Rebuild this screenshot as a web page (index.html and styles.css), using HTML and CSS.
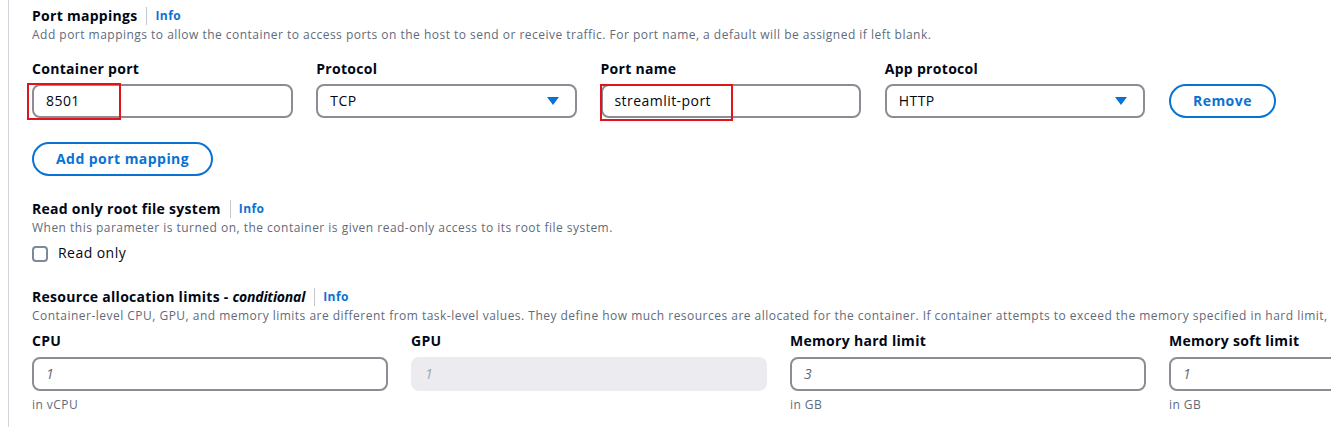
FILE: index.html
```html
<!DOCTYPE html>
<html lang="en">
<head>
<meta charset="utf-8">
<title>Port mappings</title>
<link rel="stylesheet" href="styles.css">
</head>
<body>
<div class="panel">
  <section class="sec sec-ports">
    <div class="head"><h3>Port mappings</h3><span class="sep"></span><a class="info">Info</a></div>
    <p class="desc">Add port mappings to allow the container to access ports on the host to send or receive traffic. For port name, a default will be assigned if left blank.</p>
    <div class="row-ports">
      <div class="field">
        <label class="label">Container port</label>
        <div class="input">8501</div>
        <span class="mark mark-port"></span>
      </div>
      <div class="field">
        <label class="label">Protocol</label>
        <div class="input select">TCP<span class="caret"></span></div>
      </div>
      <div class="field">
        <label class="label">Port name</label>
        <div class="input">streamlit-port</div>
        <span class="mark mark-name"></span>
      </div>
      <div class="field">
        <label class="label">App protocol</label>
        <div class="input select">HTTP<span class="caret"></span></div>
      </div>
      <div class="field field-btn">
        <button class="btn">Remove</button>
      </div>
    </div>
    <button class="btn btn-add">Add port mapping</button>
  </section>

  <section class="sec sec-ro">
    <div class="head"><h3>Read only root file system</h3><span class="sep"></span><a class="info">Info</a></div>
    <p class="desc">When this parameter is turned on, the container is given read-only access to its root file system.</p>
    <div class="check"><span class="box"></span><span>Read only</span></div>
  </section>

  <section class="sec sec-res">
    <div class="head"><h3>Resource allocation limits - <em>conditional</em></h3><span class="sep"></span><a class="info">Info</a></div>
    <p class="desc nowrap">Container-level CPU, GPU, and memory limits are different from task-level values. They define how much resources are allocated for the container. If container attempts to exceed the memory specified in hard limit, the container is terminated.</p>
    <div class="row-res">
      <div class="field">
        <label class="label">CPU</label>
        <div class="input ph">1</div>
        <p class="hint">in vCPU</p>
      </div>
      <div class="field">
        <label class="label">GPU</label>
        <div class="input ph disabled">1</div>
      </div>
      <div class="field">
        <label class="label">Memory hard limit</label>
        <div class="input ph">3</div>
        <p class="hint">in GB</p>
      </div>
      <div class="field">
        <label class="label">Memory soft limit</label>
        <div class="input ph">1</div>
        <p class="hint">in GB</p>
      </div>
    </div>
  </section>
</div>
</body>
</html>
```

FILE: styles.css
```css
html, body {
  margin: 0;
  padding: 0;
  overflow: hidden;
  background: #ffffff;
}
body {
  font-family: "Open Sans", "Noto Sans", Arial, sans-serif;
  color: #000716;
  font-size: 14px;
  line-height: 22px;
  letter-spacing: 0.45px;
}
.panel {
  margin-left: 8px;
  border-left: 1px solid #d1d5db;
  padding: 5px 0 20px 23px;
  width: 1500px;
  min-height: 420px;
}
.head {
  display: flex;
  align-items: center;
  height: 22px;
}
.head h3 {
  margin: 0;
  font-size: 14px;
  font-weight: 700;
  line-height: 22px;
  letter-spacing: 0.28px;
}
.head h3 em {
  font-style: italic;
  letter-spacing: -0.2px;
}
.sep {
  width: 1px;
  height: 18px;
  background: #c6c6cd;
  margin: 0 8px 0 9px;
}
.info {
  color: #0972d3;
  font-weight: 700;
  font-size: 12px;
  line-height: 16px;
}
.desc {
  margin: 0;
  font-size: 12px;
  line-height: 16px;
  color: #5f6b7a;
  letter-spacing: 0.48px;
}
.nowrap { white-space: nowrap; }

.row-ports {
  display: grid;
  grid-template-columns: repeat(4, 260.5px) auto;
  column-gap: 23.75px;
  margin-top: 15px;
  align-items: end;
}
.field {
  position: relative;
  display: flex;
  flex-direction: column;
}
.label {
  font-weight: 700;
  font-size: 14px;
  line-height: 22px;
  margin-bottom: 4px;
  letter-spacing: 0.3px;
}
.input {
  box-sizing: border-box;
  height: 34px;
  border: 2px solid #8c8c94;
  border-radius: 8px;
  padding: 4px 12px;
  font-size: 14px;
  line-height: 22px;
  color: #000716;
  position: relative;
  background: #fff;
}
.select .caret {
  position: absolute;
  right: 16px;
  top: 11px;
  width: 0;
  height: 0;
  border-left: 6px solid transparent;
  border-right: 6px solid transparent;
  border-top: 8px solid #0972d3;
}
.ph {
  font-style: italic;
  color: #656871;
}
.disabled {
  background: #ebebf0;
  border-color: #ebebf0;
  color: #9ba7b6;
}
.field-btn { align-items: flex-start; }
.btn {
  box-sizing: border-box;
  height: 34px;
  border: 2px solid #0972d3;
  border-radius: 20px;
  background: #fff;
  color: #0972d3;
  font-family: inherit;
  font-weight: 700;
  font-size: 14px;
  line-height: 22px;
  letter-spacing: 0.45px;
  padding: 4px 22px;
  cursor: pointer;
}
.btn-add {
  margin-top: 24px;
  display: block;
}
.mark {
  position: absolute;
  border: 2px solid #e3131b;
  box-sizing: border-box;
  pointer-events: none;
}
.mark-port {
  left: -5px;
  top: 25px;
  width: 94px;
  height: 37px;
}
.mark-name {
  left: -1px;
  top: 26px;
  width: 133px;
  height: 37px;
}

.sec-ro { margin-top: 22px; }
.check {
  display: flex;
  align-items: center;
  margin-top: 6px;
  height: 22px;
}
.check .box {
  box-sizing: border-box;
  width: 16px;
  height: 16px;
  border: 2px solid #7d8998;
  border-radius: 4px;
  margin-right: 10px;
  margin-top: 2px;
}

.sec-res { margin-top: 22px; }
.row-res {
  display: grid;
  grid-template-columns: repeat(4, 356px);
  column-gap: 23px;
  margin-top: 6px;
}
.row-res .label { margin-bottom: 5px; }
.hint {
  margin: 6px 0 0;
  font-size: 12px;
  line-height: 16px;
  color: #5f6b7a;
}
```
